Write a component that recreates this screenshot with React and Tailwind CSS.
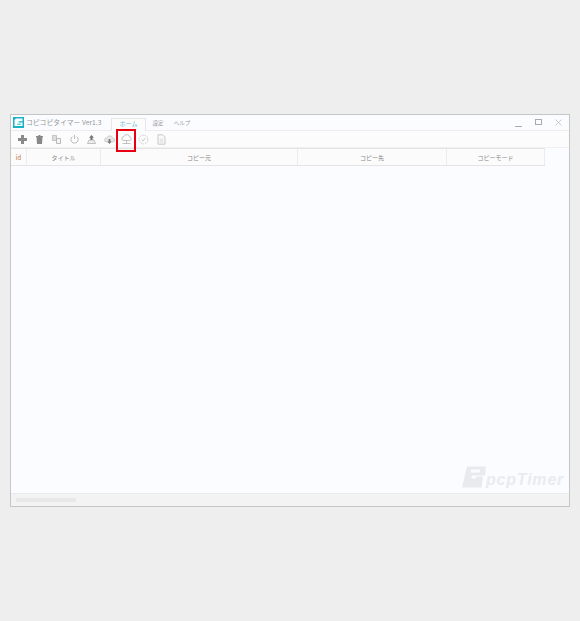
import React from "react";

const font = { fontFamily: '"Noto Sans CJK JP","Liberation Sans",sans-serif' };

const Ic = ({ children }) => (
  <div className="w-[17.4px] h-[17px] flex items-center justify-center shrink-0">
    <svg width="11" height="11" viewBox="0 0 11 11" fill="none">{children}</svg>
  </div>
);

function Toolbar() {
  return (
    <div className="h-[17px] flex items-center pl-[2.4px] bg-[#fcfcfc] border-b border-[#f0f0f0] relative shrink-0">
      <Ic><path d="M4 1h3v3h3v3H7v3H4V7H1V4h3z" fill="#8a8a8a" /></Ic>
      <Ic><path d="M2.500 3h6l-.5 7H3zM2 2h7v1H2zM4.500 1h2v1h-2z" fill="#888" /></Ic>
      <Ic>
        <path d="M1.500 1.500h4v5h-4z" fill="#ddd" stroke="#bbb" strokeWidth=".8" />
        <path d="M5.500 4.500h4v5h-4z" fill="#f4f4f4" stroke="#aaa" strokeWidth=".8" />
      </Ic>
      <Ic>
        <path d="M3.400 2.600a3.600 3.600 0 1 0 4.200 0" stroke="#aaa" strokeWidth=".8" />
        <path d="M5.500 1v4" stroke="#aaa" strokeWidth=".8" />
      </Ic>
      <Ic>
        <path d="M1.500 9.500 3 6h5l1.500 3.500z" fill="#eee" stroke="#aaa" strokeWidth=".7" />
        <path d="M5.500 1 8 3.800H6.600V6H4.400V3.800H3z" fill="#777" />
      </Ic>
      <Ic>
        <path d="M2.500 8h6a2 2 0 0 0 .3-4 3.200 3.200 0 0 0-6-.2A2.100 2.100 0 0 0 2.500 8z" fill="#e6e6e6" stroke="#bbb" strokeWidth=".6" />
        <path d="M5.500 10 3.400 7.400h1.200V5h1.800v2.400h1.200z" fill="#777" />
      </Ic>
      <Ic>
        <path d="M2.600 6.500h5.800a1.800 1.800 0 0 0 .2-3.600 3 3 0 0 0-5.800-.2 1.900 1.900 0 0 0-.2 3.800z" stroke="#aaa" strokeWidth=".7" />
        <path d="M5.500 6.500V9.500M1.500 9.500h8" stroke="#aaa" strokeWidth=".7" />
      </Ic>
      <Ic>
        <circle cx="5.500" cy="5.500" r="4.400" stroke="#bbb" strokeWidth=".8" strokeDasharray="1.200 .8" />
        <path d="M3.600 5.500 5 7l2.400-3" stroke="#bbb" strokeWidth=".8" />
      </Ic>
      <Ic>
        <path d="M2 .8h4.600L9 3.200v7H2z" fill="#fafafa" stroke="#bbb" strokeWidth=".8" />
        <path d="M3.600 5h3.800M3.600 6.600h3.800M3.600 8.200h3.800" stroke="#ccc" strokeWidth=".6" />
      </Ic>
      <div className="absolute left-[105px] top-[-2px] w-[20px] h-[23px] border-2 border-[#e60012]" />
    </div>
  );
}

const Head = ({ w, c, children }) => (
  <div className={`${w} ${c || "text-[#888]"} shrink-0 flex items-center justify-center border-r border-[#ececec] text-[6px]`}>
    {children}
  </div>
);

export default function App() {
  return (
    <div className="min-h-[621px] bg-[#eeeeee] pt-[114px] pl-[10px]" style={font}>
      <div className="relative w-[560px] h-[393px] bg-[#fbfcff] border border-[#c6c6c6] flex flex-col overflow-hidden">
        <div className="h-[16px] flex items-end bg-[#fbfcff] border-b border-[#ececec] shrink-0">
          <div className="h-[15px] flex items-center pl-[2px] w-[99px]">
            <svg width="11" height="11" viewBox="0 0 11 11" className="shrink-0">
              <path d="M0 0h11v11H0z" fill="#17b3c4" />
              <path d="M3 1.500h6.500v2.800H5.500v1.200h4V9H1.500V3z" fill="#fff" />
              <path d="M4.200 6.700h3.600v1H4.200z" fill="#17b3c4" />
            </svg>
            <span className="ml-[2px] text-[6.8px] text-[#959595] whitespace-nowrap">コピコピタイマー Ver1.3</span>
          </div>
          <div className="h-[13px] w-[35px] ml-px -mb-px bg-[#fcfcfc] border border-b-0 border-[#e6e6e6] flex items-center justify-center text-[6px] text-[#5cc0d8]">
            <span className="-mt-[3px]">ホーム</span>
          </div>
          <div className="h-[13px] w-[24px] flex items-center justify-center text-[5.5px] text-[#999]">設定</div>
          <div className="h-[13px] w-[24px] flex items-center justify-center text-[5.5px] text-[#999]">ヘルプ</div>
          <div className="flex-1" />
          <div className="h-[15px] flex items-center pr-[7px] text-[#999]">
            <div className="w-[7px] h-px bg-[#aaa] mt-[7px]" />
            <div className="w-[7px] h-[6px] border border-[#aaa] -mt-[1px] ml-[13px]" />
            <svg width="7" height="7" viewBox="0 0 7 7" className="ml-[13px]">
              <path d="M.5.5l6 6M6.500.5l-6 6" stroke="#bbb" strokeWidth=".8" />
            </svg>
          </div>
        </div>
        <Toolbar />
        <div className="h-[18px] flex w-[534px] bg-[#fbfbfb] border-y border-[#e4e4e4] shrink-0">
          <Head w="w-[16px]" c="text-[#c07030]">id</Head>
          <Head w="w-[74px]">タイトル</Head>
          <Head w="w-[197px]">コピー元</Head>
          <Head w="w-[149px]">コピー先</Head>
          <Head w="w-[98px]">コピーモード</Head>
        </div>
        <div className="flex-1" />
        <div className="h-[13px] bg-[#f3f3f3] border-t border-[#ebebeb] flex items-center pl-[5px] shrink-0">
          <div className="w-[60px] h-[4px] bg-[#e8e8e8]" />
        </div>
        <div className="absolute left-[451px] top-[351px] flex items-end select-none">
          <svg width="24" height="22" viewBox="0 0 24 21">
            <path d="M5 0h19l-1 9H10l-.5 3H14l.5-2H21l-1.500 11H0z" fill="#e8eaee" />
            <path d="M9 3h9l-.3 3H8.600z" fill="#fbfcff" />
          </svg>
          <span
            className="text-[#e9ebef] text-[16px] font-bold italic leading-none tracking-[0.8px] whitespace-nowrap"
            style={{ fontFamily: '"Liberation Sans",sans-serif' }}
          >
            pcpTimer
          </span>
        </div>
      </div>
    </div>
  );
}
